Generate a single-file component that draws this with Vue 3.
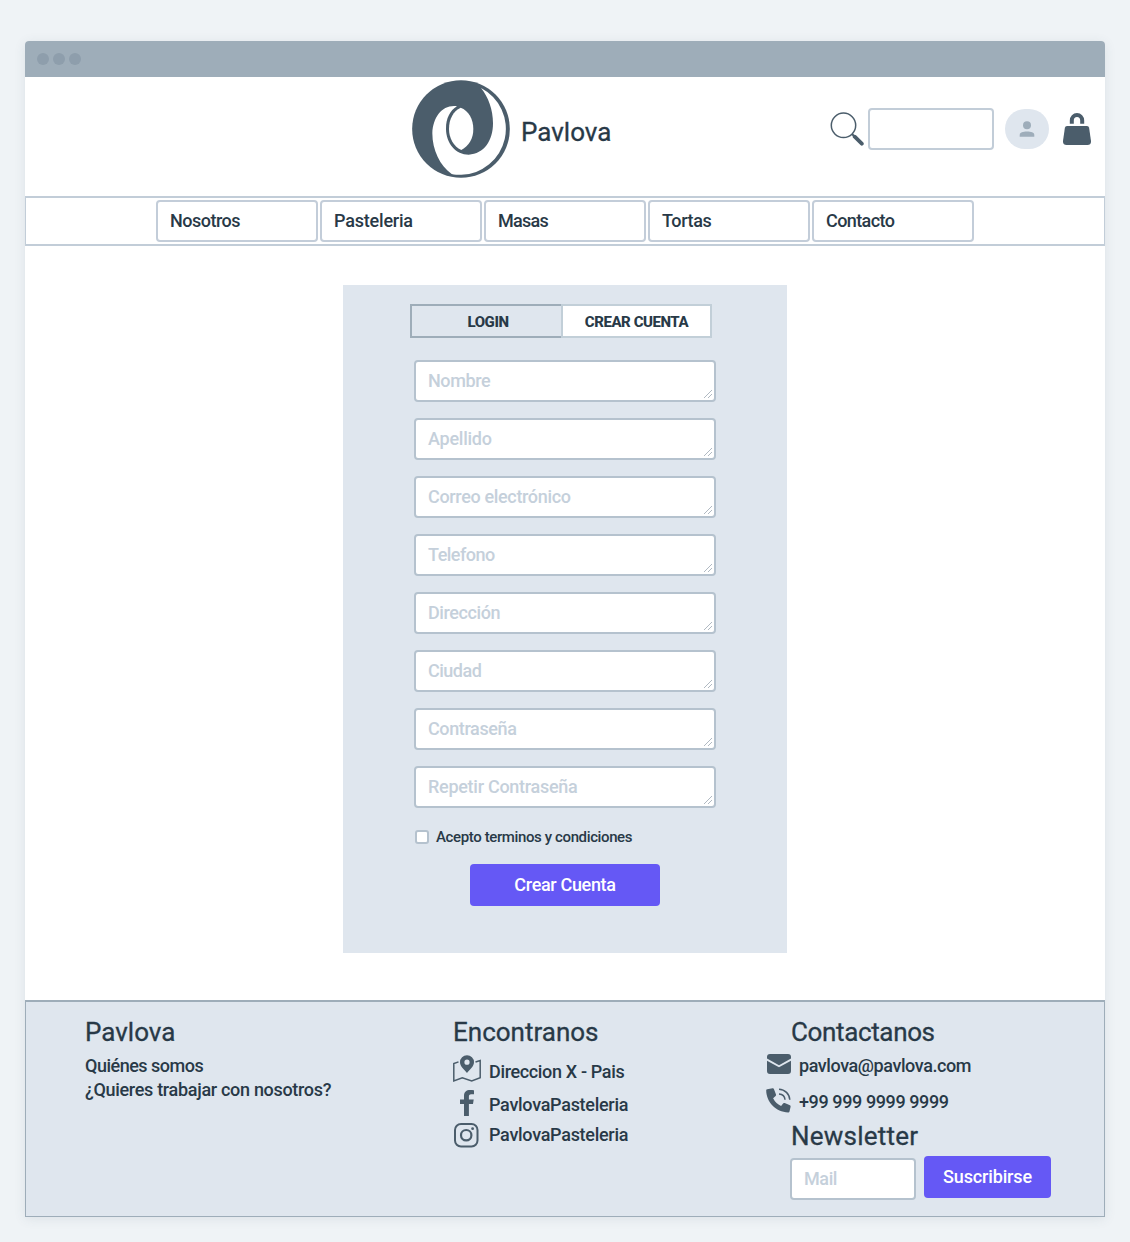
<script setup>
const navItems = [
  { label: 'Nosotros', ls: -0.5 },
  { label: 'Pasteleria', ls: -0.2 },
  { label: 'Masas', ls: -0.7 },
  { label: 'Tortas', ls: -0.4 },
  { label: 'Contacto', ls: -0.6 },
]
const fields = [
  { label: 'Nombre', ls: -0.4 },
  { label: 'Apellido', ls: -0.25 },
  { label: 'Correo electrónico', ls: -0.34 },
  { label: 'Telefono', ls: -0.5 },
  { label: 'Dirección', ls: -0.4 },
  { label: 'Ciudad', ls: -0.5 },
  { label: 'Contraseña', ls: -0.38 },
  { label: 'Repetir Contraseña', ls: -0.28 },
]
</script>

<template>
  <div class="window">
    <div class="titlebar"><i></i><i></i><i></i></div>

    <header class="header">
      <div class="brand">
        <svg class="logo" viewBox="36 30 294 294">
          <circle cx="183" cy="177" r="146.500" fill="#4b5d6b" />
          <path fill="#fff" d="M243 54A138 138 0 0 1 184 314.500C173 314.500 163 314 155 312C120 288 97 240 97 190C99 140 128 103 171 109C150 122 138 145 138 176C138 220 168 254 206 254C252 252 279 212 279 160C279 118 265 82 243 54Z" />
          <path fill="#fff" d="M182 113C206 122 220 147 220 177C220 205 207 228 184 240C160 228 147 204 147 176C147 147 160 123 182 113Z" />
        </svg>
        <span class="title">Pavlova</span>
      </div>
      <div class="tools">
        <svg class="search" viewBox="0 0 34 34">
          <circle cx="13.500" cy="13.300" r="12.200" fill="none" stroke="#4b5d6b" stroke-width="1.500" />
          <path d="M22 22L25 25" stroke="#4b5d6b" stroke-width="2" />
          <path d="M24.700 24.700L31.800 31.700" stroke="#4b5d6b" stroke-width="3.800" stroke-linecap="round" />
        </svg>
        <input class="search-box" />
        <div class="avatar">
          <svg width="16" height="16" viewBox="0 0 16 16" fill="#9eadba">
            <circle cx="8" cy="4.200" r="4" />
            <path d="M.7 15.700V14C.7 11.600 4 10.600 8 10.600S15.300 11.600 15.300 14V15.700Z" />
          </svg>
        </div>
        <svg class="bag" viewBox="0 0 28 32">
          <path d="M8.800 10.700V7.500A5.200 5.500 0 0 1 19.200 7.500V10.700" fill="none" stroke="#4b5d6b" stroke-width="4" />
          <path fill="#4b5d6b" d="M4 13H24Q25.800 13 26.100 14.800L28 28Q28.300 32 24.500 32H3.500Q-.3 32 0 28L1.900 14.800Q2.200 13 4 13Z" />
        </svg>
      </div>
    </header>

    <nav class="nav">
      <a v-for="n in navItems" :key="n.label" :style="{ letterSpacing: n.ls + 'px' }">{{ n.label }}</a>
    </nav>

    <main class="main">
      <section class="panel">
        <div class="tabs">
          <div class="tab login"><span>LOGIN</span></div>
          <div class="tab create"><span>CREAR CUENTA</span></div>
        </div>
        <div class="fields">
          <label v-for="f in fields" :key="f.label" class="field">
            <span :style="{ letterSpacing: f.ls + 'px' }">{{ f.label }}</span>
            <svg class="grip" viewBox="0 0 10 10"><path d="M1 9L9 1M5 9L9 5" /></svg>
          </label>
        </div>
        <label class="terms"><i class="check"></i><span>Acepto terminos y condiciones</span></label>
        <button class="btn submit">Crear Cuenta</button>
      </section>
    </main>

    <footer class="footer">
      <div class="col about">
        <h2 class="title">Pavlova</h2>
        <p>Quiénes somos</p>
        <p class="jobs">¿Quieres trabajar con nosotros?</p>
      </div>
      <div class="col find">
        <h2 class="title">Encontranos</h2>
        <div class="row r1">
          <svg width="28" height="28" viewBox="0 0 28 28">
            <path d="M5.500 6.900L.8 8.600V26L9.300 22.800L18.700 26L27.200 22.800V5.500L22.500 7" fill="none" stroke="#4b5d6b" stroke-width="1.500" />
            <path fill="#4b5d6b" fill-rule="evenodd" d="M14 .3A7 7 0 0 0 7 7.300C7 11.500 11.500 15 14 18C16.500 15 21 11.500 21 7.300A7 7 0 0 0 14 .3ZM14 4.600A2.600 2.600 0 1 1 14 9.800A2.600 2.600 0 1 1 14 4.600Z" />
          </svg>
          <span>Direccion X - Pais</span>
        </div>
        <div class="row r2">
          <svg width="28" height="28" viewBox="0 0 28 28">
            <path fill="#4b5d6b" d="M21 1.200V5.300H18.200C16.300 5.300 15.900 6.300 15.900 7.700V10.400H20.700L20 15H15.900V27H11V15H7V10.400H11V6.900C11 3 13.500 1 17 1C18.700 1 20.300 1.100 21 1.200Z" />
          </svg>
          <span>PavlovaPasteleria</span>
        </div>
        <div class="row r3">
          <svg width="28" height="28" viewBox="0 0 28 28" fill="none" stroke="#4b5d6b">
            <rect x="2" y="3" width="22.500" height="22.500" rx="6" stroke-width="2" />
            <circle cx="13.200" cy="14.200" r="5.200" stroke-width="2.200" />
            <circle cx="19.600" cy="7.700" r="1.400" fill="#4b5d6b" stroke="none" />
          </svg>
          <span>PavlovaPasteleria</span>
        </div>
      </div>
      <div class="col contact">
        <h2 class="title con">Contactanos</h2>
        <div class="row mail">
          <svg width="26" height="22" viewBox="0 0 26 22" fill="#4b5d6b">
            <path d="M1 5.600V4Q1 1 4 1H22Q25 1 25 4V5.600L13 12.200Z" />
            <path d="M1 7.700L13 14.200L25 7.700V18Q25 21 22 21H4Q1 21 1 18Z" />
          </svg>
          <span>pavlova@pavlova.com</span>
        </div>
        <div class="row phone">
          <svg width="26" height="26" viewBox="0 0 26 26">
            <path fill="#4b5d6b" d="M.2 2.300Q.3 1.500 1.200 1.300L6.600.200Q7.500 0 7.900 1L10 6.600Q10.300 7.400 9.600 8L7.100 10.300Q9.600 15.500 15.100 18.100L17.300 15.300Q17.900 14.700 18.700 15L23.900 17.300Q24.800 17.800 24.600 18.700L23.500 23.600Q23.200 24.500 22.300 24.500C9.500 24 .3 14 .2 2.300Z" />
            <path fill="none" stroke="#4b5d6b" stroke-width="1.500" d="M13 1.200C18.800 1.300 23.600 6.100 23.800 11.800M13 6C16.500 6.200 18.800 8.600 19 11.800" />
          </svg>
          <span>+99 999 9999 9999</span>
        </div>
        <h2 class="title news">Newsletter</h2>
        <div class="subscribe">
          <div class="mailbox"><span>Mail</span></div>
          <button class="btn sub">Suscribirse</button>
        </div>
      </div>
    </footer>
  </div>
</template>

<style>
body {
  background: #eff3f6;
}
</style>

<style scoped>
* {
  box-sizing: border-box;
}
.window {
  width: 1080px;
  height: 1176px;
  margin: 41px 25px 25px;
  display: flex;
  flex-direction: column;
  background: #fff;
  border-radius: 4px 4px 0 0;
  box-shadow: 0 2px 12px rgba(60, 80, 100, 0.1);
  font: 500 18px/24px Roboto, sans-serif;
  color: #283947;
  white-space: nowrap;
}
.titlebar {
  height: 36px;
  flex: none;
  background: #9eadb9;
  border-radius: 4px 4px 0 0;
  display: flex;
  align-items: center;
  gap: 4px;
  padding-left: 12px;
}
.titlebar i {
  width: 12px;
  height: 12px;
  border-radius: 50%;
  background: #8e9eac;
}
.header {
  height: 119px;
  flex: none;
  display: flex;
  justify-content: space-between;
  align-items: flex-start;
  padding: 3px 14px 0 387px;
}
.brand {
  display: flex;
  align-items: center;
  gap: 11px;
}
.logo {
  width: 98px;
  height: 98px;
}
.title {
  margin: 0;
  font-size: 26px;
  font-weight: 400;
  line-height: 32px;
  -webkit-text-stroke: 0.3px #283947;
}
.brand .title {
  margin-top: 6px;
}
.tools {
  display: flex;
  align-items: center;
  margin-top: 28px;
}
.search {
  width: 34px;
  height: 34px;
  margin-right: 4px;
}
.search-box {
  width: 126px;
  height: 42px;
  border: 2px solid #c2cdd8;
  border-radius: 4px;
  margin-right: 11px;
  background: #fff;
}
.avatar {
  width: 44px;
  height: 40px;
  border-radius: 20px;
  background: #dfe6ee;
  display: flex;
  align-items: center;
  justify-content: center;
  margin-right: 14px;
}
.bag {
  width: 28px;
  height: 32px;
}
.nav {
  height: 50px;
  flex: none;
  border: solid #c2cdd8;
  border-width: 2px 1px;
  display: flex;
  justify-content: center;
  align-items: center;
  gap: 2px;
}
.nav a {
  width: 162px;
  height: 42px;
  border: 2px solid #c3cdd9;
  border-radius: 4px;
  padding-left: 12px;
  line-height: 38px;
}
.main {
  flex: 1;
  display: flex;
  justify-content: center;
  padding-top: 39px;
}
.panel {
  width: 444px;
  height: 668px;
  background: #dfe6ee;
  padding-top: 19px;
  display: flex;
  flex-direction: column;
  align-items: center;
}
.tabs {
  display: flex;
  width: 302px;
  margin-left: -8px;
  height: 34px;
  font-size: 15px;
  font-weight: 800;
  letter-spacing: -0.45px;
}
.tab {
  display: flex;
  align-items: center;
  justify-content: center;
}
.tab span {
  margin-top: 1px;
}
.login {
  width: 151px;
  border: 2px solid #9eadb9;
  border-right: 0;
  padding-left: 3px;
}
.create {
  width: 151px;
  border: 2px solid #c2cfd8;
  background: #fff;
}
.fields {
  display: flex;
  flex-direction: column;
  gap: 16px;
  margin-top: 22px;
}
.field,
.mailbox {
  position: relative;
  width: 302px;
  height: 42px;
  border: 2px solid #b5c2ce;
  border-radius: 4px;
  background: #fff;
  padding-left: 12px;
  line-height: 38px;
  color: #c5d0db;
}
.grip {
  position: absolute;
  right: 1px;
  bottom: 1px;
  width: 10px;
  height: 10px;
  fill: none;
  stroke: #b0b9c2;
  stroke-width: 1;
}
.terms {
  width: 300px;
  height: 20px;
  margin-top: 19px;
  display: flex;
  align-items: center;
  font-size: 15px;
  letter-spacing: -0.38px;
}
.check {
  width: 14px;
  height: 14px;
  border: 2px solid #b5c2ce;
  border-radius: 3px;
  background: #fff;
  margin-right: 7px;
}
.btn {
  height: 42px;
  border: 0;
  padding: 0;
  border-radius: 4px;
  background: #6558f5;
  color: #fff;
  font: inherit;
}
.submit {
  width: 190px;
  margin-top: 17px;
  letter-spacing: -0.33px;
}
.footer {
  height: 217px;
  flex: none;
  border: 1px solid #9eadb9;
  border-top-width: 2px;
  background: #dfe6ee;
  display: grid;
  grid-template-columns: 368px 313px 1fr;
  padding: 14px 0 0 59px;
}
.col p {
  margin: 0;
  letter-spacing: -0.5px;
}
.col .jobs {
  letter-spacing: -0.31px;
}
.about p:first-of-type {
  margin-top: 6px;
}
.row {
  display: flex;
  align-items: center;
}
.row svg {
  flex: none;
}
.find .row {
  gap: 8px;
  letter-spacing: -0.28px;
}
.find .r1 {
  margin-top: 7px;
  height: 28px;
  letter-spacing: -0.35px;
}
.r1 span {
  margin-top: 5px;
}
.r2 {
  margin-top: 6px;
  height: 28px;
}
.r2 span {
  margin-top: 4px;
}
.r3 {
  margin-top: 4px;
  height: 28px;
}
.r3 svg {
  margin-top: -1px;
}
.contact .title {
  margin-left: 25px;
}
.contact .con {
  letter-spacing: -0.36px;
}
.mail {
  margin-top: 5px;
  height: 22px;
  gap: 7px;
  letter-spacing: -0.42px;
}
.mail span {
  margin-top: 4px;
}
.phone {
  margin-top: 13px;
  height: 26px;
  gap: 7px;
  letter-spacing: -0.4px;
}
.phone span {
  margin-top: 1px;
}
.contact .news {
  margin-top: 6px;
  letter-spacing: 0.22px;
}
.subscribe {
  display: flex;
  margin: 4px 0 0 24px;
  gap: 8px;
}
.mailbox {
  width: 126px;
  margin-top: 2px;
  letter-spacing: -0.4px;
}
.sub {
  width: 127px;
  letter-spacing: -0.15px;
}
</style>
